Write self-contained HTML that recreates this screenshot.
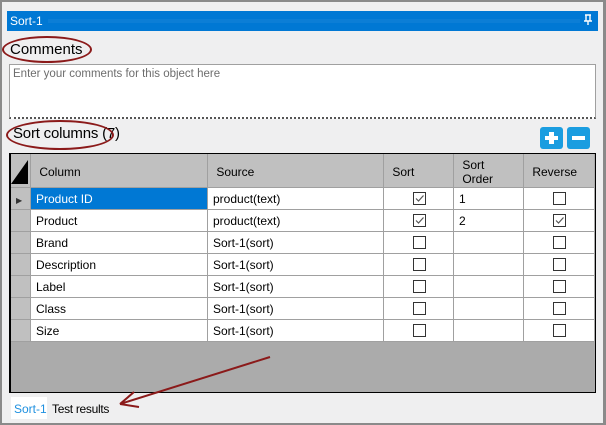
<!DOCTYPE html>
<html><head><style>
*{margin:0;padding:0;box-sizing:border-box}
body{width:606px;height:425px;background:#efeff0;position:relative;overflow:hidden;font-family:"Liberation Sans",sans-serif;font-size:12px;color:#000}
.a{position:absolute}
.cell{position:absolute;height:22px;line-height:22px;padding-left:5px;border-right:1px solid #a0a0a0;border-bottom:1px solid #a0a0a0;background:#fff;white-space:nowrap}
.cb{position:absolute;width:13px;height:13px;border:1px solid #333;background:#fff}
.h{position:absolute;background:#c0c0c0;border-right:1px solid #a0a0a0;padding-left:5px}
</style></head><body>
<div class="a" style="left:0;top:0;width:606px;height:2px;background:#8a8a8a"></div>
<div class="a" style="left:0;top:0;width:2px;height:425px;background:#8a8a8a"></div>
<div class="a" style="right:0;top:0;width:3px;height:425px;background:#8a8a8a"></div>
<div class="a" style="left:0;bottom:0;width:606px;height:2px;background:#8a8a8a"></div>
<div class="a" style="left:7px;top:11px;width:591px;height:20px;background:#0078d4"></div>
<div class="a" style="left:48px;top:19px;width:532px;height:4px;background-image:radial-gradient(circle,#3e97df 0.5px,transparent 0.6px);background-size:2px 2px;opacity:0.8"></div>
<div class="a" style="left:10px;top:14px;color:#fff;font-size:12px">Sort-1</div>
<svg class="a" style="left:583px;top:14px" width="10" height="12"><path d="M2 1H8M3 1V7H7V1M1 7H9M5 7V11" stroke="#fff" stroke-width="1.4" fill="none"/></svg>
<div class="a" style="left:10px;top:41px;font-size:15px">Comments</div>
<div class="a" style="left:2px;top:36px;width:90px;height:27px;border:2px solid #8b1a1a;border-radius:50%"></div>
<div class="a" style="left:9px;top:64px;width:587px;height:55px;background:#fff;border:1px solid #a0a0a0;border-bottom:2px dotted #555"></div>
<div class="a" style="left:13px;top:68px;color:#6d6d6d;font-size:11.5px">Enter your comments for this object here</div>
<div class="a" style="left:13px;top:125px;font-size:15px;letter-spacing:-0.2px">Sort columns (7)</div>
<div class="a" style="left:6px;top:120px;width:108px;height:30px;border:2px solid #8b1a1a;border-radius:50%"></div>
<div class="a" style="left:540px;top:127px;width:23px;height:22px;background:#1a9de0;border-radius:3px"></div>
<div class="a" style="left:545px;top:136px;width:13px;height:4px;background:#fff"></div>
<div class="a" style="left:549px;top:132px;width:5px;height:12px;background:#fff"></div>
<div class="a" style="left:567px;top:127px;width:23px;height:22px;background:#1a9de0;border-radius:3px"></div>
<div class="a" style="left:572px;top:136px;width:13px;height:4px;background:#fff"></div>
<div class="a" style="left:9px;top:153px;width:587px;height:240px;background:#ababab;border:1px solid #000;border-left:2px solid #000"></div>
<div class="a" style="left:11px;top:154px;width:20px;height:34px;background:#c0c0c0;border-right:1px solid #a0a0a0"></div>
<svg class="a" style="left:11px;top:160px" width="18" height="24"><polygon points="17,0 17,24 0,24" fill="#000"/></svg>
<div class="h" style="left:31px;top:154px;width:177px;height:34px;line-height:36px">&nbsp;Column</div>
<div class="h" style="left:208px;top:154px;width:176px;height:34px;line-height:36px">&nbsp;Source</div>
<div class="h" style="left:384px;top:154px;width:70px;height:34px;line-height:36px">&nbsp;Sort</div>
<div class="h" style="left:454px;top:154px;width:70px;height:34px;line-height:14px;padding-top:4px">&nbsp;Sort<br>&nbsp;Order</div>
<div class="h" style="left:524px;top:154px;width:70px;height:34px;line-height:36px;border-right:none">&nbsp;Reverse</div>
<div class="a" style="left:11px;top:187px;width:583px;height:1px;background:#a0a0a0"></div>
<div id="rows"></div>
<script>
var r=[["Product ID","product(text)",1,"1",0],["Product","product(text)",1,"2",1],["Brand","Sort-1(sort)",0,"",0],["Description","Sort-1(sort)",0,"",0],["Label","Sort-1(sort)",0,"",0],["Class","Sort-1(sort)",0,"",0],["Size","Sort-1(sort)",0,"",0]];
var h="",chk='<svg width="11" height="11" style="position:absolute;left:0;top:0"><path d="M2 5.5L4.5 8L9.5 2.5" stroke="#555" stroke-width="1.2" fill="none"/></svg>';
r.forEach(function(x,i){var t=188+i*22;
h+='<div class="cell" style="left:11px;top:'+t+'px;width:20px;background:#c0c0c0">'+(i==0?'<span style="font-size:8px;color:#333">▶</span>':'')+'</div>';
h+='<div class="cell" style="left:31px;top:'+t+'px;width:177px;'+(i==0?'background:#0078d4;color:#fff':'')+'">'+x[0]+'</div>';
h+='<div class="cell" style="left:208px;top:'+t+'px;width:176px">'+x[1]+'</div>';
h+='<div class="cell" style="left:384px;top:'+t+'px;width:70px"><div class="cb" style="left:29px;top:4px">'+(x[2]?chk:'')+'</div></div>';
h+='<div class="cell" style="left:454px;top:'+t+'px;width:70px">'+x[3]+'</div>';
h+='<div class="cell" style="left:524px;top:'+t+'px;width:70px;border-right:none"><div class="cb" style="left:29px;top:4px">'+(x[4]?chk:'')+'</div></div>';});
document.getElementById('rows').innerHTML=h;
</script>
<div class="a" style="left:11px;top:397px;width:36px;height:22px;background:#fff"></div>
<div class="a" style="left:14px;top:402px;color:#1e90e0">Sort-1</div>
<div class="a" style="left:52px;top:402px;letter-spacing:-0.3px">Test results</div>
<svg class="a" style="left:0;top:0" width="606" height="425"><path d="M270 357L120 404M120 404L134 392M120 404L139 407" stroke="#8b1a1a" stroke-width="2" fill="none"/></svg>
</body></html>
